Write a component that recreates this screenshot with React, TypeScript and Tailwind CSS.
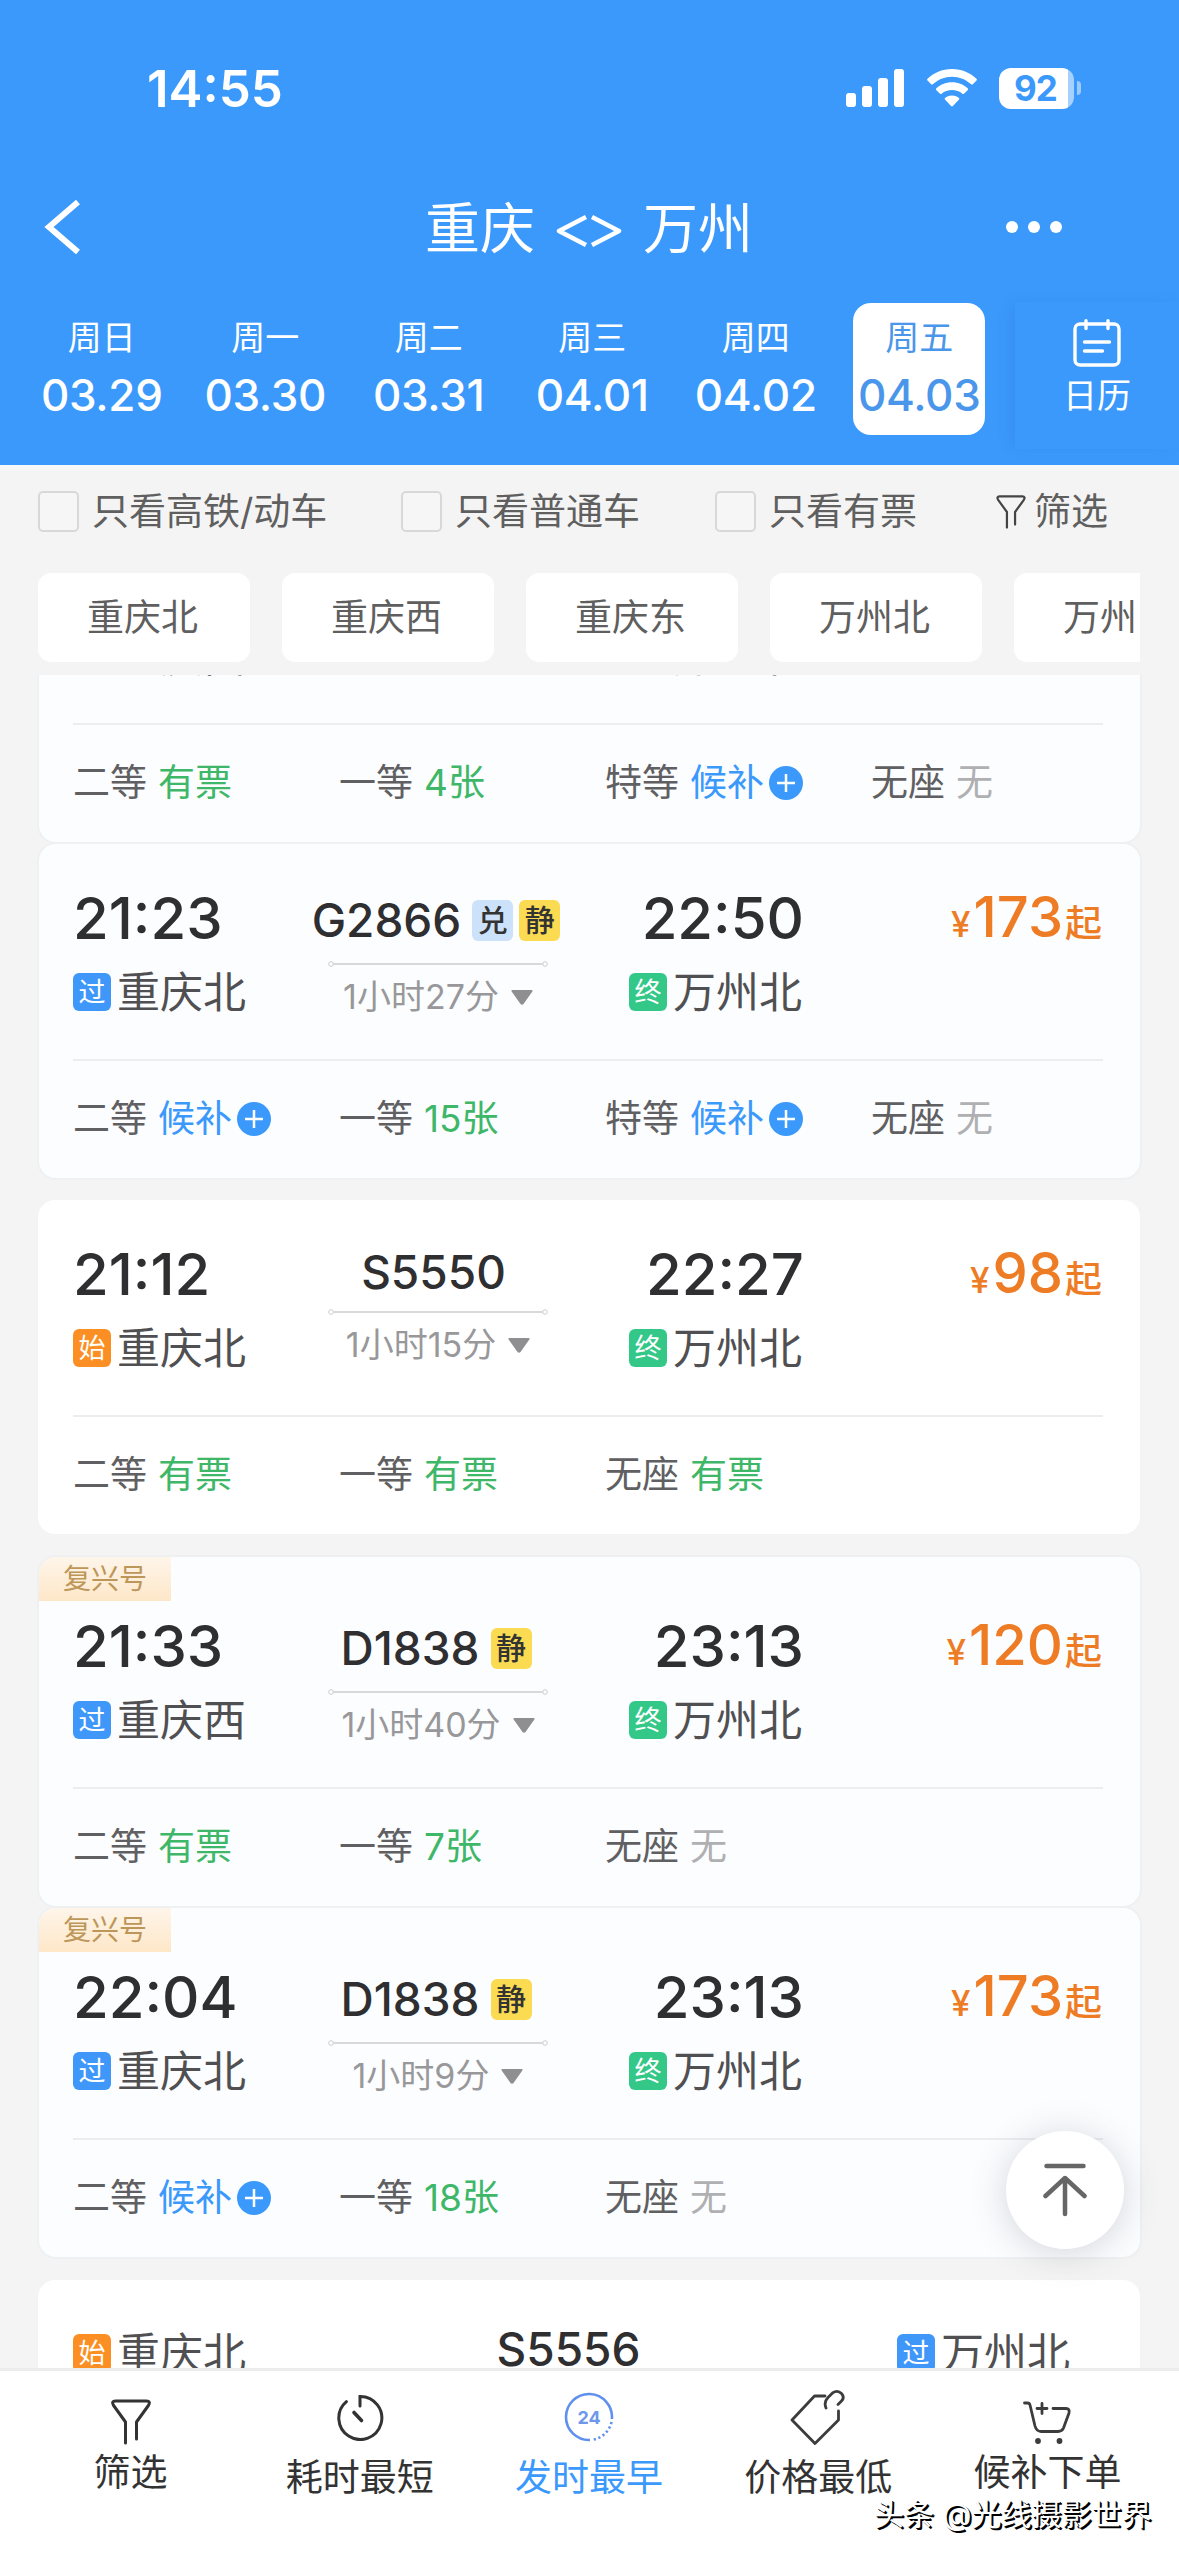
import React from 'react';

type Seat = { label: string; value: string; kind: 'ok' | 'wait' | 'none' };

type Train = {
    depart?: string;
    arrive?: string;
    from: string;
    fromBadge: string;
    to: string;
    code?: string;
    tags: string[];
    duration: string;
    price?: string;
    fuxing?: boolean;
    tinted?: boolean;
    className?: string;
    seats: Seat[];
};

const days = [
    { week: '周日', date: '03.29' },
    { week: '周一', date: '03.30' },
    { week: '周二', date: '03.31' },
    { week: '周三', date: '04.01' },
    { week: '周四', date: '04.02' },
    { week: '周五', date: '04.03', active: true },
];

const stations = ['重庆北', '重庆西', '重庆东', '万州北', '万州'];

const trains: Train[] = [
    {
        // scrolled under the filter bar, only its lower half shows
        from: '重庆西', fromBadge: '过', to: '万州北',
        tags: [], duration: '1小时35分',
        tinted: true, className: '-mt-[167px]',
        seats: [
            { label: '二等', value: '有票', kind: 'ok' },
            { label: '一等', value: '4张', kind: 'ok' },
            { label: '特等', value: '候补', kind: 'wait' },
            { label: '无座', value: '无', kind: 'none' },
        ],
    },
    {
        depart: '21:23', arrive: '22:50', from: '重庆北', fromBadge: '过', to: '万州北',
        code: 'G2866', tags: ['兑', '静'], duration: '1小时27分', price: '173',
        tinted: true, className: 'mt-0.5',
        seats: [
            { label: '二等', value: '候补', kind: 'wait' },
            { label: '一等', value: '15张', kind: 'ok' },
            { label: '特等', value: '候补', kind: 'wait' },
            { label: '无座', value: '无', kind: 'none' },
        ],
    },
    {
        depart: '21:12', arrive: '22:27', from: '重庆北', fromBadge: '始', to: '万州北',
        code: 'S5550', tags: [], duration: '1小时15分', price: '98',
        className: 'mt-[22px]',
        seats: [
            { label: '二等', value: '有票', kind: 'ok' },
            { label: '一等', value: '有票', kind: 'ok' },
            { label: '无座', value: '有票', kind: 'ok' },
        ],
    },
    {
        depart: '21:33', arrive: '23:13', from: '重庆西', fromBadge: '过', to: '万州北',
        code: 'D1838', tags: ['静'], duration: '1小时40分', price: '120',
        tinted: true, fuxing: true, className: 'mt-[23px]',
        seats: [
            { label: '二等', value: '有票', kind: 'ok' },
            { label: '一等', value: '7张', kind: 'ok' },
            { label: '无座', value: '无', kind: 'none' },
        ],
    },
    {
        depart: '22:04', arrive: '23:13', from: '重庆北', fromBadge: '过', to: '万州北',
        code: 'D1838', tags: ['静'], duration: '1小时9分', price: '173',
        tinted: true, fuxing: true, className: 'mt-0.5',
        seats: [
            { label: '二等', value: '候补', kind: 'wait' },
            { label: '一等', value: '18张', kind: 'ok' },
            { label: '无座', value: '无', kind: 'none' },
        ],
    },
];

const badgeColors: Record<string, string> = {
    '过': 'bg-[#3f97f9]',
    '始': 'bg-[#fb8f24]',
    '终': 'bg-[#33c788]',
};

const seatColors = {
    ok: 'text-[#3eb768]',
    wait: 'text-[#3b99fc]',
    none: 'text-[#b0b0b2]',
};

const FunnelIcon = ({ className }: { className: string }) => (
    <svg viewBox="0 0 40 46" fill="none" stroke="currentColor" strokeWidth="3" strokeLinecap="round" strokeLinejoin="round" className={className}>
        <path d="M14.5 44V23L2.6 6.5Q0 2 4.5 2H35.5Q40 2 37.4 6.5L25.5 23V40" />
    </svg>
);

const ClockIcon = () => (
    <svg viewBox="0 0 48 48" fill="none" stroke="#333" strokeWidth="3" strokeLinecap="round" className="size-12">
        <path d="M24 13V3.5A21.5 21.5 0 1 1 10.4 8.6" />
        <path d="M18 19.5L25.5 27.5" strokeWidth="3.6" />
    </svg>
);

const Hours24Icon = () => (
    <svg viewBox="0 0 50 50" fill="none" stroke="#5f90ee" strokeWidth="2.6" className="size-[50px]">
        <path d="M26 48A23 23 0 1 1 47.9 27" />
        <path d="M47.5 30A23 23 0 0 1 28 47.8" strokeDasharray="2.2 2.6" />
        <text x="25" y="31.5" textAnchor="middle" fontSize="18" fontWeight="700" fill="#6f97ea" stroke="none">24</text>
    </svg>
);

const TagIcon = () => (
    <svg viewBox="0 0 56 56" fill="none" stroke="#3c3c3c" strokeWidth="2.8" strokeLinecap="round" strokeLinejoin="round" className="size-14">
        <path d="M35 7H24.5L2 31L25 54.5L48.5 31V22" />
        <path d="M36 19Q33.5 13 38 8.5L42.5 4Q47.5 .5 51.5 4.5Q55 8.5 51.5 12L48 15.5" />
    </svg>
);

const CartIcon = () => (
    <svg viewBox="0 0 48 46" fill="none" stroke="#3c3c3c" strokeWidth="2.8" strokeLinecap="round" strokeLinejoin="round" className="h-[46px] w-12">
        <path d="M1.5 3H4.5Q6.5 3 7 5L12 26Q13.5 31.5 18 31.5H35Q39 31.5 40.5 28L46 13Q47 8.5 43 8.5H30" />
        <path d="M19 3.5V13.5M14 8.5H24" />
        <circle cx="15" cy="41" r="2.9" fill="#3c3c3c" stroke="none" />
        <circle cx="36.5" cy="41" r="2.9" fill="#3c3c3c" stroke="none" />
    </svg>
);

const CalendarIcon = () => (
    <svg viewBox="0 0 48 48" fill="none" stroke="white" strokeWidth="3.4" strokeLinecap="round" className="size-12">
        <rect x="2" y="5" width="44" height="41" rx="5" />
        <path d="M13 1.7V9.5M35 1.7V9.5M11.5 23H36.5M11.5 32H29.5" />
    </svg>
);

const StatusBar = () => (
    <div className="flex h-[176px] items-center justify-between pl-[147px] pr-[98px]">
        <span className="text-[51px] font-semibold leading-none">14:55</span>
        <div className="flex items-center">
            <svg viewBox="0 0 58 38" fill="white" className="h-[38px] w-[58px]">
                <rect x="0" y="24" width="10" height="14" rx="3" />
                <rect x="16" y="17" width="10" height="21" rx="3" />
                <rect x="32" y="9" width="10" height="29" rx="3" />
                <rect x="48" y="0" width="10" height="38" rx="3" />
            </svg>
            <svg viewBox="0 0 50 38" fill="white" className="ml-[23px] h-[38px] w-[50px]">
                <path d="M25 0C35 0 43.5 4 49.5 9.8Q50.3 10.7 49.5 11.6L45.8 15.3Q45 16 44.2 15.3C39 10.5 32.5 7.7 25 7.7S11 10.5 5.8 15.3Q5 16 4.2 15.3L.5 11.6Q-.3 10.7 .5 9.8C6.5 4 15 0 25 0Z" />
                <path d="M25 13.3C31.5 13.3 36.8 15.8 40.8 19.4Q41.6 20.2 40.8 21L37 24.7Q36.2 25.4 35.4 24.7C32.5 22.3 29 21 25 21S17.5 22.3 14.6 24.7Q13.8 25.4 13 24.7L9.2 21Q8.4 20.2 9.2 19.4C13.2 15.8 18.5 13.3 25 13.3Z" />
                <path d="M25 26.5C28 26.5 30.3 27.5 32 29Q32.7 29.8 32 30.6L25.9 37Q25 37.9 24.1 37L18 30.6Q17.3 29.8 18 29C19.7 27.5 22 26.5 25 26.5Z" />
            </svg>
            <div className="ml-[22px] flex h-[41px] w-[75px] items-center justify-center overflow-hidden rounded-[12px] bg-linear-to-r from-white from-92% to-[#a6d0fe] to-92% pr-0.5 text-[35px] font-bold leading-none tracking-tight text-[#3b99fc]">92</div>
            <div className="ml-[3px] h-3.5 w-1 rounded-r-full bg-[#9dcbfd]"></div>
        </div>
    </div>
);

const Header = () => (
    <header className="h-[465px] shrink-0 bg-[#3b99fc] text-white">
        <StatusBar />
        <div className="flex h-[102px] items-center justify-between pl-[43px] pr-[117px]">
            <svg viewBox="0 0 38 54" fill="none" stroke="white" strokeWidth="6" className="h-[54px] w-[38px]">
                <path d="M35 2L6 27L35 52" />
            </svg>
            <h1 className="flex items-center pl-[91px] pt-[3px] text-[55px] leading-none">
                <span>重庆</span>
                <svg viewBox="0 0 66 34" fill="none" stroke="white" strokeWidth="4.5" strokeLinejoin="round" className="mx-[21px] mt-1 h-[34px] w-[66px]">
                    <path d="M30 3L3 17L30 31M36 3L63 17L36 31" />
                </svg>
                <span>万州</span>
            </h1>
            <div className="flex gap-[10px]">
                <i className="size-3 rounded-full bg-white"></i>
                <i className="size-3 rounded-full bg-white"></i>
                <i className="size-3 rounded-full bg-white"></i>
            </div>
        </div>
        <div className="flex h-[187px] items-start">
            <div className="ml-5 flex w-[981px] pt-[25px]">
                {days.map((day) => (
                    <div key={day.date} className="flex flex-1 justify-center">
                        <div className={day.active
                            ? 'flex h-[132px] w-[132px] flex-col items-center rounded-[18px] bg-white pt-[18px] text-[#4a96ea]'
                            : 'flex h-[132px] w-[132px] flex-col items-center pt-[18px]'}>
                            <span className="text-[34px] leading-[34px]">{day.week}</span>
                            <span className="mt-[18px] text-[44px] font-[450] leading-[44px] tracking-[-0.3px]">{day.date}</span>
                        </div>
                    </div>
                ))}
            </div>
            <div className="ml-auto mt-[24px] flex h-[147px] w-[164px] flex-col items-center bg-[#3b99fc] pt-[17px] shadow-[-6px_0_14px_-4px_rgba(30,90,170,0.18)]">
                <CalendarIcon />
                <span className="mt-[12px] text-[34px] leading-[34px]">日历</span>
            </div>
        </div>
    </header>
);

const CheckItem = ({ label }: { label: string }) => (
    <label className="flex items-center gap-[13px]">
        <i className="size-[41px] rounded-[5px] border-2 border-[#d8d8d8] bg-[#f6f6f6]"></i>
        <span>{label}</span>
    </label>
);

const Filters = () => (
    <div className="h-[210px] shrink-0 border-t-[5px] border-[#f7f8f8] px-[38px] text-[37px] leading-none text-[#5f5f5f]">
        <div className="flex h-[83px] items-center">
            <div className="w-[363px]"><CheckItem label="只看高铁/动车" /></div>
            <div className="w-[314px]"><CheckItem label="只看普通车" /></div>
            <CheckItem label="只看有票" />
            <div className="ml-auto mr-[33px] flex items-center gap-2">
                <FunnelIcon className="h-[34px] w-[30px] text-[#444]" />
                <span>筛选</span>
            </div>
        </div>
        <div className="mr-px mt-5 flex gap-[32px] overflow-hidden">
            {stations.map((name) => (
                <div key={name} className="flex h-[89px] w-[212px] shrink-0 items-center rounded-[13px] bg-white pl-[49px]">{name}</div>
            ))}
        </div>
    </div>
);

const Station = ({ badge, name }: { badge: string; name: string }) => (
    <div className="flex items-center gap-[6px] text-[43px] leading-[44px] text-[#505052]">
        <i className={`${badgeColors[badge]} flex size-[38px] items-center justify-center rounded-[6px] text-[27px] not-italic leading-none text-white`}>{badge}</i>
        <span>{name}</span>
    </div>
);

const SeatCell = ({ seat }: { seat: Seat }) => (
    <div className="flex w-[266px] shrink-0 items-center text-[37px] leading-none text-[#606062]">
        <span>{seat.label}</span>
        <span className={`ml-[11px] ${seatColors[seat.kind]}`}>{seat.value}</span>
        {seat.kind === 'wait' && (
            <svg viewBox="0 0 34 34" className="ml-[5px] size-[34px]">
                <circle cx="17" cy="17" r="17" fill="#3b99fc" />
                <path d="M8 17H26M17 8V26" stroke="white" strokeWidth="2.5" />
            </svg>
        )}
    </div>
);

const TrainCard = ({ train }: { train: Train }) => {
    const tagged = train.tags.length > 0;
    return (
        <article className={`${train.className} ${train.tinted ? 'mx-[39px] bg-[#fcfdff] pl-[34px] shadow-[0_0_0_2px_#eff0f2]' : 'ml-[38px] mr-[39px] bg-white pl-[35px]'} relative shrink-0 rounded-[17px] pr-[37px]`}>
            {train.fuxing && (
                <div className="absolute left-0 top-0 flex h-[44px] w-[132px] items-center rounded-tl-[17px] bg-linear-to-b from-[#fef5ea] to-[#fee7c8] pl-6 text-[28px] leading-none text-[#bd9659]">复兴号</div>
            )}
            <div className={train.fuxing ? 'flex h-[230px] pt-[15px]' : 'flex h-[215px]'}>
                <div className="w-[240px] pt-[45px]">
                    <p className="h-[58px] text-[58px] font-[450] leading-[58px] text-[#2f2f31]">{train.depart}</p>
                    <div className="mt-[23px]"><Station badge={train.fromBadge} name={train.from} /></div>
                </div>
                <div className={`flex w-[250px] flex-col items-center ${tagged ? 'pt-[55px]' : 'pt-[51px]'}`}>
                    <div className="-ml-1 flex h-[42px] items-center gap-1.5 text-[#2f2f31]">
                        <span className="mr-[5px] text-[46px] font-[450] leading-none">{train.code}</span>
                        {train.tags.map((tag) => (
                            <span key={tag} className={`${tag === '静' ? 'bg-[#fbdb52]' : 'bg-[#cce2fb]'} flex size-[41px] items-center justify-center rounded-[6px] text-[30px] font-medium leading-none text-[#333]`}>{tag}</span>
                        ))}
                    </div>
                    <svg viewBox="0 0 220 6" fill="none" stroke="#cbccd0" className={`h-1.5 w-[220px] ${tagged ? 'mt-[20px]' : 'mt-[16px]'}`}>
                        <circle cx="3" cy="3" r="2.3" />
                        <circle cx="217" cy="3" r="2.3" />
                        <path d="M5.5 3H214.5" strokeWidth="1.5" />
                    </svg>
                    <div className="mt-[13px] flex items-center gap-3 text-[34px] leading-[34px] text-[#98989a]">
                        <span>{train.duration}</span>
                        <svg viewBox="0 0 22 15" fill="#8f8f91" className="h-[15px] w-[22px]">
                            <path d="M1.5 0H20.5Q22.5 .3 21 2L12.5 14Q11 15.6 9.5 14L1 2Q-.5 .3 1.5 0Z" />
                        </svg>
                    </div>
                </div>
                <div className="flex w-[240px] flex-col items-end pt-[45px]">
                    <p className="-mr-px h-[58px] text-[58px] font-[450] leading-[58px] text-[#2f2f31]">{train.arrive}</p>
                    <div className="mr-px mt-[23px]"><Station badge="终" name={train.to} /></div>
                </div>
                {train.price && (
                    <div className="mr-px flex flex-1 items-baseline justify-end pt-[44px] font-medium leading-[58px] text-[#ee7c24]">
                        <span className="mr-[3px] text-[35px]">¥</span>
                        <span className="text-[56px]">{train.price}</span>
                        <span className="ml-0.5 text-[37px]">起</span>
                    </div>
                )}
            </div>
            <div className="flex h-[119px] items-center border-t-2 border-[#ecedef] pb-0.5">
                {train.seats.map((seat) => (
                    <SeatCell key={seat.label} seat={seat} />
                ))}
            </div>
        </article>
    );
};

const tabs = [
    { label: '筛选', icon: <FunnelIcon className="h-[46px] w-10 text-[#333]" />, className: 'pt-[28px] text-[#333]', gap: 'mt-[9px]' },
    { label: '耗时最短', icon: <ClockIcon />, className: 'pt-[22px] text-[#333]', gap: 'mt-[18px]' },
    { label: '发时最早', icon: <Hours24Icon />, className: 'pt-[21px] text-[#3b99fc]', gap: 'mt-[17px]' },
    { label: '价格最低', icon: <TagIcon />, className: 'pt-[18px] text-[#333]', gap: 'mt-[14px]' },
    { label: '候补下单', icon: <CartIcon />, className: 'pt-[29px] text-[#333]', gap: 'mt-[8px]' },
];

const BottomBar = () => (
    <nav className="flex h-[188px] shrink-0 border-t-[3px] border-[#ececec] bg-white pl-4 pr-[17px]">
        {tabs.map((tab) => (
            <div key={tab.label} className={`flex flex-1 flex-col items-center ${tab.className}`}>
                {tab.icon}
                <span className={`${tab.gap} text-[37px] leading-[37px]`}>{tab.label}</span>
            </div>
        ))}
    </nav>
);

const App: React.FC = () => {
    return (
        <div className="relative flex h-[2556px] w-[1179px] flex-col overflow-hidden bg-[#f4f4f4] font-['Inter','Noto_Sans_CJK_SC',sans-serif]">
            <Header />
            <Filters />
            <main className="flex flex-1 flex-col overflow-hidden">
                {trains.map((train, index) => (
                    <TrainCard key={index} train={train} />
                ))}
                <article className="ml-[38px] mr-[39px] mt-[23px] flex h-[334px] shrink-0 items-start justify-between rounded-[17px] bg-white pl-[35px] pr-[70px]">
                    <div className="mt-[51px]"><Station badge="始" name="重庆北" /></div>
                    <span className="mr-[6px] mt-[46px] text-[46px] font-[450] leading-[46px] text-[#2f2f31]">S5556</span>
                    <div className="mt-[51px]"><Station badge="过" name="万州北" /></div>
                </article>
            </main>
            <BottomBar />
            <button className="absolute left-[1006px] top-[2131px] flex size-[118px] items-center justify-center rounded-full bg-white shadow-[0_4px_36px_rgba(70,75,90,0.22)]">
                <svg viewBox="0 0 44 54" fill="none" stroke="#666" strokeWidth="4.5" strokeLinecap="round" strokeLinejoin="round" className="h-[54px] w-11">
                    <path d="M3.5 3H40.5M22 15V51M2.5 33L22 15L41.5 33" />
                </svg>
            </button>
            <p className="absolute left-[874px] top-[2498px] whitespace-nowrap text-[30px] leading-8 text-white [text-shadow:2px_2px_0_#000,1px_1px_0_#000]">头条 @光线摄影世界</p>
        </div>
    );
};

export default App;
